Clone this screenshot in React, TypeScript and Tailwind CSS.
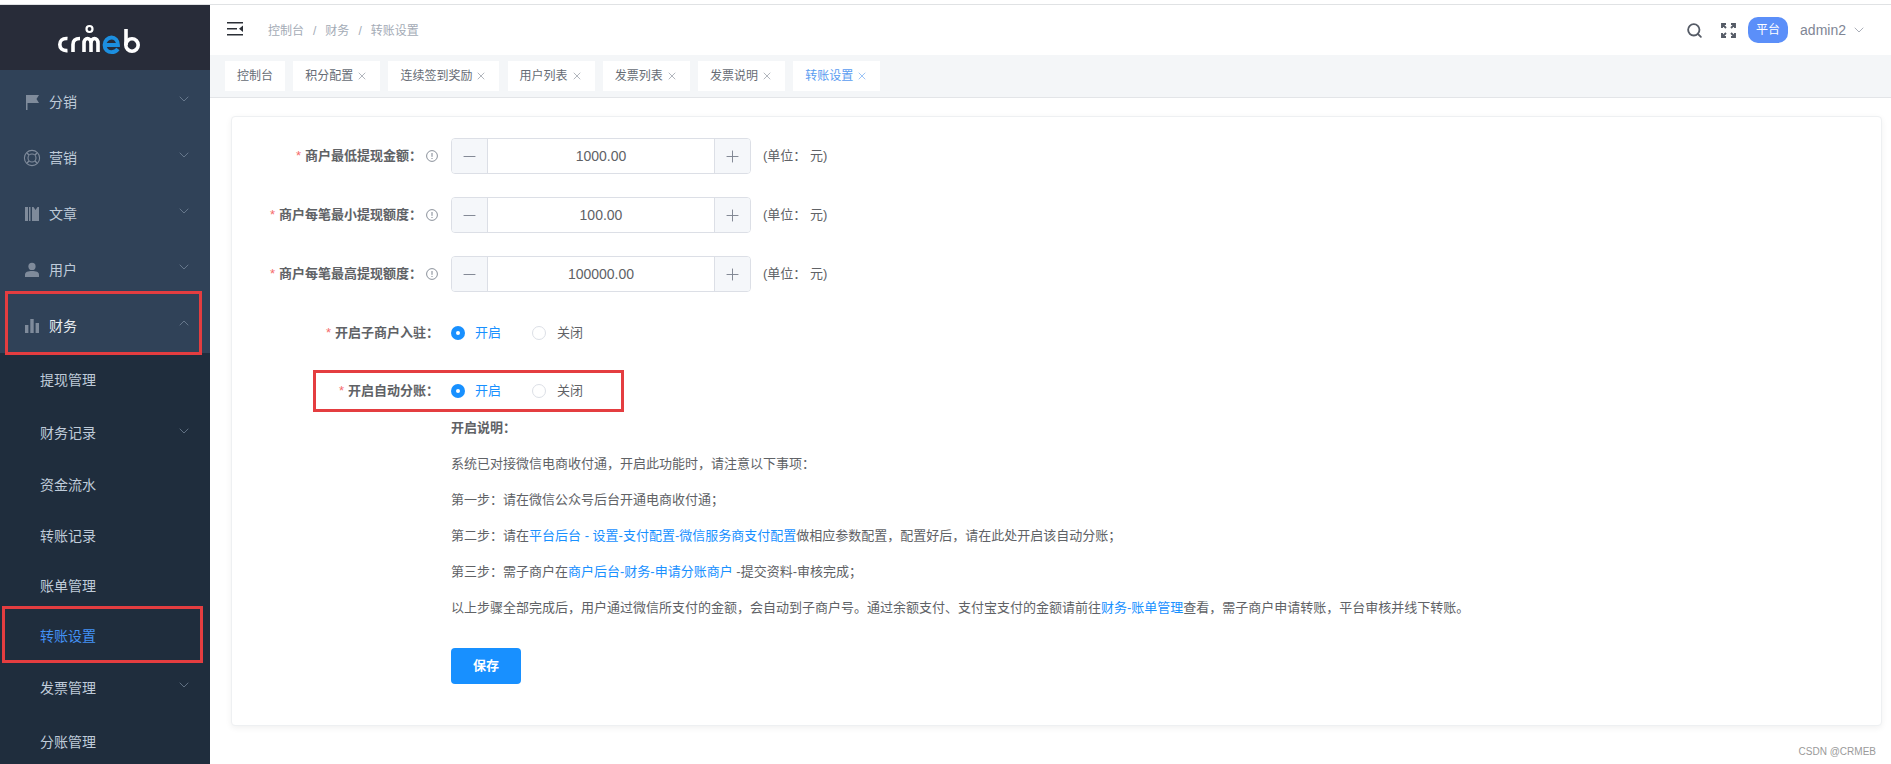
import { ChevronDown, ChevronUp, Minus, Plus, Search, X } from "lucide-react"

const menus = [
  { name: "分销", icon: "flag" },
  { name: "营销", icon: "ring" },
  { name: "文章", icon: "book" },
  { name: "用户", icon: "user" },
]

const subMenus = [
  { name: "提现管理", h: "h-[53px]" },
  { name: "财务记录", h: "h-[53px]", arrow: true },
  { name: "资金流水", h: "h-[51px]" },
  { name: "转账记录", h: "h-[50px]" },
  { name: "账单管理", h: "h-[50px]" },
  { name: "转账设置", h: "h-[50px]", active: true },
  { name: "发票管理", h: "h-[54px]", arrow: true },
  { name: "分账管理", h: "h-[54px]" },
]

const tabs = ["积分配置", "连续签到奖励", "用户列表", "发票列表", "发票说明"]

const amounts = [
  { label: "商户最低提现金额：", value: "1000.00" },
  { label: "商户每笔最小提现额度：", value: "100.00" },
  { label: "商户每笔最高提现额度：", value: "100000.00" },
]

function Logo() {
  return (
    <svg width="110" height="50" viewBox="0 0 110 50" fill="none" strokeWidth="3.6" stroke="#fff">
      <path d="M17.5 23.5C12 23 9.8 26 9.8 29.5S12 36 17.5 35.6" />
      <path d="M23 37V29.5C23 25.5 25.5 23.5 30 23.5" />
      <path d="M34 37V28C34 22 41 22 41 28V37M41 28C41 22 48 22 48 28V37" />
      <circle cx="39.5" cy="14" r="3" strokeWidth="2.2" />
      <path
        d="M54.5 30H68C68 25.5 65 22.5 61.5 22.5S54.5 25.5 54.5 30S58 37.2 61.5 37.2C64.5 37.2 66.5 36 68 34"
        stroke="#1c8fe0"
        strokeWidth="3.8"
      />
      <path d="M76 14V30" />
      <circle cx="82" cy="30" r="6.2" />
    </svg>
  )
}

function MenuIcon({ type }: { type: string }) {
  if (type === "flag") {
    return (
      <svg width="16" height="18" viewBox="0 0 16 18" fill="#7f8b9b">
        <path d="M2 2H15L12.5 6L15 10H3.5V17H2Z" />
      </svg>
    )
  }
  if (type === "ring") {
    return (
      <svg width="18" height="18" viewBox="0 0 18 18" fill="none" stroke="#7f8b9b" strokeWidth="1.1" className="-ml-[1px]">
        <circle cx="9" cy="9" r="7.6" />
        <circle cx="9" cy="9" r="4" />
        <path d="M4 4L6 6M14 4L12 6M4 14L6 12M14 14L12 12" strokeWidth="1.4" />
      </svg>
    )
  }
  if (type === "book") {
    return (
      <svg width="16" height="16" viewBox="0 0 16 16" fill="#7f8b9b">
        <path d="M1 1H4V15H1ZM5 1H6.5V15H5ZM8 1H9.5L11.5 4L13.5 1H15V15H8Z" />
      </svg>
    )
  }
  if (type === "user") {
    return (
      <svg width="16" height="16" viewBox="0 0 16 16" fill="#7f8b9b">
        <circle cx="8" cy="4.4" r="3.6" />
        <path d="M1 15V12.5C1 10 4 9 8 9S15 10 15 12.5V15Z" />
      </svg>
    )
  }
  return (
    <svg width="16" height="16" viewBox="0 0 16 16" fill="#7f8b9b">
      <path d="M1 7H4.4V15H1ZM6.3 1H9.7V15H6.3ZM11.6 5H15V15H11.6Z" />
    </svg>
  )
}

function Sidebar() {
  return (
    <aside className="w-[210px] shrink-0 h-full bg-[#304258] overflow-hidden">
      <div className="h-[65px] bg-[#282c39] pl-[50px] pt-[10px]">
        <Logo />
      </div>
      <div className="pt-[3px]">
        {menus.map((m) => (
          <div key={m.name} className="h-[56px] pt-[2px] flex items-center pl-[24px] pr-[18px] text-[14px] text-[#bfcbd9]">
            <span className="w-[25px] flex justify-start">
              <MenuIcon type={m.icon} />
            </span>
            <span className="flex-1">{m.name}</span>
            <ChevronDown size={16} strokeWidth={1} className="text-[#8292a6] -mt-[6px]" />
          </div>
        ))}
        <div className="h-[56px] pt-[2px] flex items-center pl-[24px] pr-[18px] text-[14px] text-[#e8ecf0]">
          <span className="w-[25px] flex justify-start">
            <MenuIcon type="chart" />
          </span>
          <span className="flex-1">财务</span>
          <ChevronUp size={16} strokeWidth={1} className="text-[#8292a6] -mt-[6px]" />
        </div>
      </div>
      <div className="bg-[#1f2d3d]">
        {subMenus.map((s) => (
          <div
            key={s.name}
            className={`${s.h} pt-[2px] flex items-center pl-[40px] pr-[18px] text-[14px] ${s.active ? "text-[#4391f4]" : "text-[#bfcbd9]"}`}
          >
            <span className="flex-1">{s.name}</span>
            {s.arrow && <ChevronDown size={16} strokeWidth={1} className="text-[#8292a6] -mt-[6px]" />}
          </div>
        ))}
      </div>
    </aside>
  )
}

function Header() {
  return (
    <div className="h-[50px] flex items-center bg-white">
      <svg width="16" height="14" viewBox="0 0 16 14" fill="#2b2f36" className="ml-[17px] -mt-[2px]">
        <path d="M0 0H16V1.6H0ZM0 6H10V7.6H0ZM0 12H16V13.6H0ZM16 3.6V10L12 6.8Z" />
      </svg>
      <div className="ml-[25px] flex items-center text-[12px] text-[#a4abb6] mt-[1px]">
        <span>控制台</span>
        <span className="mx-[9px]">/</span>
        <span>财务</span>
        <span className="mx-[9px]">/</span>
        <span>转账设置</span>
      </div>
      <div className="ml-auto flex items-center pr-[24px]">
        <Search size={17} strokeWidth={2.6} className="text-[#555b66] mr-[18px]" />
        <svg width="15" height="15" viewBox="0 0 15 15" fill="none" stroke="#555b66" strokeWidth="1.9" className="mr-[12px]">
          <path d="M1 5V1H5M1 1L5 5M10 1H14V5M14 1L10 5M1 10V14H5M1 14L5 10M10 14H14V10M14 14L10 10" />
        </svg>
        <span className="w-[40px] h-[26px] rounded-[10px] bg-[#5b8ff9] text-white text-[12px] flex items-center justify-center">
          平台
        </span>
        <span className="ml-[12px] text-[14px] text-[#808695]">admin2</span>
        <ChevronDown size={16} strokeWidth={1} className="ml-[5px] text-[#808695]" />
      </div>
    </div>
  )
}

function Tabs() {
  return (
    <div className="h-[43px] bg-[#f4f6f8] border-b border-[#e3e5e8] flex items-center gap-[8.2px] pl-[15px] text-[12px] text-[#666c75] -mb-[1px]">
      <div className="h-[30px] w-[60px] bg-white flex items-center justify-center">控制台</div>
      {tabs.map((t) => (
        <div key={t} className="h-[30px] pl-[12px] pr-[12px] bg-white flex items-center gap-[3px]">
          <span>{t}</span>
          <X size={12} strokeWidth={1.2} className="text-[#7d8490]" />
        </div>
      ))}
      <div className="h-[30px] pl-[12px] pr-[12px] bg-white flex items-center gap-[3px] text-[#5a9cf0]">
        <span>转账设置</span>
        <X size={12} strokeWidth={1.2} />
      </div>
    </div>
  )
}

function Stepper({ value }: { value: string }) {
  return (
    <div className="w-[300px] h-[36px] border border-[#dcdfe6] rounded-[4px] flex items-center overflow-hidden">
      <span className="w-[36px] h-full bg-[#f5f7fa] border-r border-[#dcdfe6] flex items-center justify-center text-[#7d8490]">
        <Minus size={19} strokeWidth={1.2} />
      </span>
      <span className="flex-1 text-center text-[14px] text-[#606266]">{value}</span>
      <span className="w-[36px] h-full bg-[#f5f7fa] border-l border-[#dcdfe6] flex items-center justify-center text-[#7d8490]">
        <Plus size={19} strokeWidth={1.2} />
      </span>
    </div>
  )
}

function Label({ text, help }: { text: string; help?: boolean }) {
  return (
    <div className="w-[219px] pr-[12px] flex items-center justify-end text-[13px] font-bold text-[#606266]">
      <span className="text-[#f56c6c] font-normal mr-[4px]">*</span>
      <span>{text}</span>
      {help && (
        <svg width="12" height="12" viewBox="0 0 12 12" fill="none" stroke="#7d8490" className="ml-[4px] mr-[1px]">
          <circle cx="6" cy="6" r="5.4" strokeWidth="0.9" />
          <path d="M6 3V6.8M6 8V9" strokeWidth="1" />
        </svg>
      )}
    </div>
  )
}

function RadioGroup() {
  return (
    <div className="flex items-center text-[13px]">
      <span className="w-[14px] h-[14px] rounded-full bg-[#1890ff] flex items-center justify-center">
        <span className="w-[4px] h-[4px] rounded-full bg-white" />
      </span>
      <span className="ml-[10px] text-[#1890ff]">开启</span>
      <span className="ml-[31px] w-[14px] h-[14px] rounded-full border border-[#dcdfe6] bg-white" />
      <span className="ml-[11px] text-[#606266]">关闭</span>
    </div>
  )
}

function Link({ children }: { children: string }) {
  return <span className="text-[#1890ff]">{children}</span>
}

function Form() {
  return (
    <div className="ml-[21px] mt-[19px] mr-[9px] h-[610px] bg-white border border-[#eef0f2] rounded-[4px] shadow-[0_2px_6px_rgba(0,0,0,0.06)] pt-[21px]">
      {amounts.map((a) => (
        <div key={a.label} className="flex items-center h-[36px] mb-[23px]">
          <Label text={a.label} help />
          <Stepper value={a.value} />
          <span className="ml-[12px] text-[13px] text-[#606266]">(单位： 元)</span>
        </div>
      ))}
      <div className="flex items-center h-[36px] mb-[23px]">
        <Label text="开启子商户入驻：" />
        <RadioGroup />
      </div>
      <div className="flex items-center h-[34px] mb-[2px]">
        <Label text="开启自动分账：" />
        <RadioGroup />
      </div>
      <div className="ml-[219px] text-[13px] text-[#606266] leading-[36px]">
        <div className="font-bold">开启说明：</div>
        <div>系统已对接微信电商收付通，开启此功能时，请注意以下事项：</div>
        <div>第一步：请在微信公众号后台开通电商收付通；</div>
        <div>
          第二步：请在<Link>平台后台 - 设置-支付配置-微信服务商支付配置</Link>做相应参数配置，配置好后，请在此处开启该自动分账；
        </div>
        <div>
          第三步：需子商户在<Link>商户后台-财务-申请分账商户</Link> -提交资料-审核完成；
        </div>
        <div>
          以上步骤全部完成后，用户通过微信所支付的金额，会自动到子商户号。通过余额支付、支付宝支付的金额请前往
          <Link>财务-账单管理</Link>查看，需子商户申请转账，平台审核并线下转账。
        </div>
        <button className="mt-[22px] w-[70px] h-[36px] rounded-[4px] bg-[#1890ff] text-white text-[13px] font-bold leading-[36px] block">
          保存
        </button>
      </div>
    </div>
  )
}

export default function App() {
  return (
    <div className="relative w-[1891px] h-[764px] overflow-hidden bg-white font-['Liberation_Sans','Noto_Sans_CJK_SC',sans-serif]">
      <div className="h-[5px] bg-white border-b border-[#e0e2e4]" />
      <div className="flex h-[759px]">
        <Sidebar />
        <main className="flex-1 min-w-0 relative">
          <Header />
          <Tabs />
          <Form />
          <div className="absolute right-[15px] bottom-[5px] text-[10px] text-[#9a9a9a]">CSDN @CRMEB</div>
        </main>
      </div>
      {/* red highlight boxes drawn over the screenshot */}
      <div className="absolute left-[5px] top-[291px] w-[197px] h-[64px] border-[3px] border-[#e43d40]" />
      <div className="absolute left-[2px] top-[606px] w-[201px] h-[57px] border-[3px] border-[#e43d40]" />
      <div className="absolute left-[313px] top-[370px] w-[311px] h-[42px] border-[3px] border-[#e43d40]" />
    </div>
  )
}
